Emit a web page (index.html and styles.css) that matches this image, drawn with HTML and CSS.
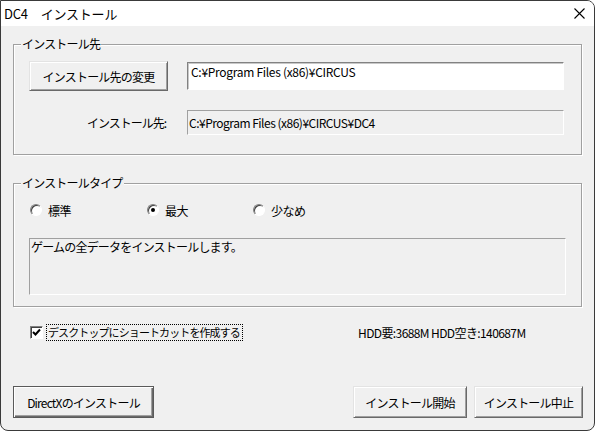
FILE: index.html
```html
<!DOCTYPE html>
<html lang="ja">
<head>
<meta charset="utf-8">
<title>DC4 インストール</title>
<link rel="stylesheet" href="styles.css">
</head>
<body>
<div class="window">
  <div class="titlebar">
    <span class="title">DC4　インストール</span>
    <span class="close">
      <svg width="11" height="11" viewBox="0 0 11 11"><path d="M0.5 0.5 L10.5 10.5 M10.5 0.5 L0.5 10.5" stroke="#000" stroke-width="1.1" fill="none"/></svg>
    </span>
  </div>
  <div class="content">
    <div class="group group-dest">
      <span class="legend">インストール先</span>
      <div class="dest-grid">
        <button class="btn btn-change">インストール先の変更</button>
        <div class="edit">C:¥Program Files (x86)¥CIRCUS</div>
        <div class="label">インストール先:</div>
        <div class="readonly">C:¥Program Files (x86)¥CIRCUS¥DC4</div>
      </div>
    </div>

    <div class="group group-type">
      <span class="legend">インストールタイプ</span>
      <div class="radios">
        <label class="radio r1"><span class="circle"></span>標準</label>
        <label class="radio r2"><span class="circle checked"></span>最大</label>
        <label class="radio r3"><span class="circle"></span>少なめ</label>
      </div>
      <div class="desc">ゲームの全データをインストールします。</div>
    </div>

    <div class="check-row">
      <span class="checkbox">
        <svg width="9" height="9" viewBox="0 0 9 9"><path d="M1 4 L3.5 6.5 L8 1.5" stroke="#000" stroke-width="2" fill="none"/></svg>
      </span>
      <span class="check-label">デスクトップにショートカットを作成する</span>
      <span class="hdd">HDD要:3688M HDD空き:140687M</span>
    </div>

    <div class="button-row">
      <button class="btn btn-default">DirectXのインストール</button>
      <div class="right-buttons">
        <button class="btn btn-start">インストール開始</button>
        <button class="btn btn-cancel">インストール中止</button>
      </div>
    </div>
  </div>
</div>
</body>
</html>
```

FILE: styles.css
```css
* { box-sizing: border-box; }
html, body {
  margin: 0;
  padding: 0;
  background: #ffffff;
}
body {
  width: 595px;
  height: 431px;
  overflow: hidden;
  font-family: "Noto Sans CJK JP", "Noto Sans", sans-serif;
  font-size: 12px;
  color: #000;
}
.window {
  width: 595px;
  height: 431px;
  border: 1px solid #3a3a3a;
  border-radius: 0 8px 8px 8px;
  overflow: hidden;
  background: #f0f0f0;
  display: flex;
  flex-direction: column;
}
.titlebar {
  height: 25px;
  background: #ffffff;
  display: flex;
  align-items: center;
  justify-content: space-between;
  padding: 0 9px 0 3px;
}
.title {
  font-size: 13px;
  letter-spacing: -0.2px;
}
.close {
  display: flex;
  align-items: center;
}
.content {
  flex: 1;
  padding: 18px 12px 0 12px;
  display: flex;
  flex-direction: column;
}
.group {
  position: relative;
  border: 1px solid #a0a0a0;
  box-shadow: inset 1px 1px 0 #ffffff, 1px 1px 0 #ffffff;
  padding: 16px 15px 19px 15px;
}
.legend {
  position: absolute;
  top: -9px;
  left: 7px;
  padding: 0 1px;
  background: #f0f0f0;
  line-height: 16px;
  letter-spacing: -0.8px;
}
.dest-grid {
  display: grid;
  grid-template-columns: 139px 377px;
  grid-template-rows: 30px 25px;
  column-gap: 19px;
  row-gap: 19px;
}
.btn {
  font-family: "Noto Sans CJK JP", "Noto Sans", sans-serif;
  font-size: 12px;
  color: #000;
  background: #f0f0f0;
  border: 1px solid;
  border-color: #e3e3e3 #696969 #696969 #e3e3e3;
  box-shadow: inset 1px 1px 0 #ffffff, inset -1px -1px 0 #a0a0a0;
  padding: 0;
  letter-spacing: -0.8px;
  height: 30px;
}
.btn-change { width: 139px; }
.edit {
  margin-top: 1px;
  height: 28px;
  background: #ffffff;
  border: 1px solid;
  border-color: #828282 #ffffff #ffffff #828282;
  box-shadow: inset 1px 1px 0 #c8c8c8;
  padding: 0 3px;
  line-height: 17px;
  letter-spacing: -0.3px;
}
.label {
  text-align: right;
  padding-right: 2px;
  line-height: 25px;
  letter-spacing: -1px;
}
.readonly {
  border: 1px solid;
  border-color: #a0a0a0 #ffffff #ffffff #a0a0a0;
  padding: 0 1px;
  line-height: 23px;
  letter-spacing: -0.5px;
}
.group-type {
  margin-top: 28px;
  padding: 18px 15px 11px 15px;
}
.radios {
  display: flex;
  height: 16px;
  align-items: center;
  padding-left: 1px;
  letter-spacing: -0.5px;
}
.radio {
  display: flex;
  align-items: center;
  gap: 6px;
}
.r1 { width: 117px; }
.r2 { width: 106px; }
.circle {
  width: 12px;
  height: 12px;
  border-radius: 50%;
  border: 1px solid;
  border-color: #808080 #ffffff #ffffff #808080;
  box-shadow: inset 1px 1px 0 #404040;
  background: #ffffff;
  display: flex;
  align-items: center;
  justify-content: center;
}
.circle.checked::after {
  content: "";
  width: 4px;
  height: 4px;
  border-radius: 50%;
  background: #000;
}
.desc {
  margin-top: 20px;
  height: 57px;
  border: 1px solid;
  border-color: #a0a0a0 #ffffff #ffffff #a0a0a0;
  padding: 0 1px;
  line-height: 16px;
  letter-spacing: -0.8px;
}
.check-row {
  margin-top: 16px;
  height: 18px;
  display: flex;
  align-items: center;
  padding-left: 17px;
}
.checkbox {
  width: 13px;
  height: 13px;
  background: #ffffff;
  border: 1px solid;
  border-color: #808080 #ffffff #ffffff #808080;
  box-shadow: inset 1px 1px 0 #404040;
  display: flex;
  align-items: center;
  justify-content: center;
}
.check-label {
  margin-left: 3px;
  border: 1px dotted #000;
  padding: 0 1px;
  font-size: 11px;
  line-height: 15px;
  width: 197px;
  letter-spacing: -0.9px;
  white-space: nowrap;
  overflow: hidden;
}
.hdd {
  margin-left: 115px;
  letter-spacing: -0.6px;
  white-space: nowrap;
}
.button-row {
  margin-top: 45px;
  display: flex;
  justify-content: space-between;
  margin-right: -1px;
}
.btn-default {
  width: 141px;
  height: 32px;
  border-color: #5a5a5a;
  box-shadow: inset 1px 1px 0 #ffffff, inset -1px -1px 0 #696969, inset -2px -2px 0 #a0a0a0;
}
.right-buttons {
  display: flex;
  gap: 7px;
}
.btn-start { width: 114px; height: 32px; }
.btn-cancel { width: 109px; height: 32px; }
```
